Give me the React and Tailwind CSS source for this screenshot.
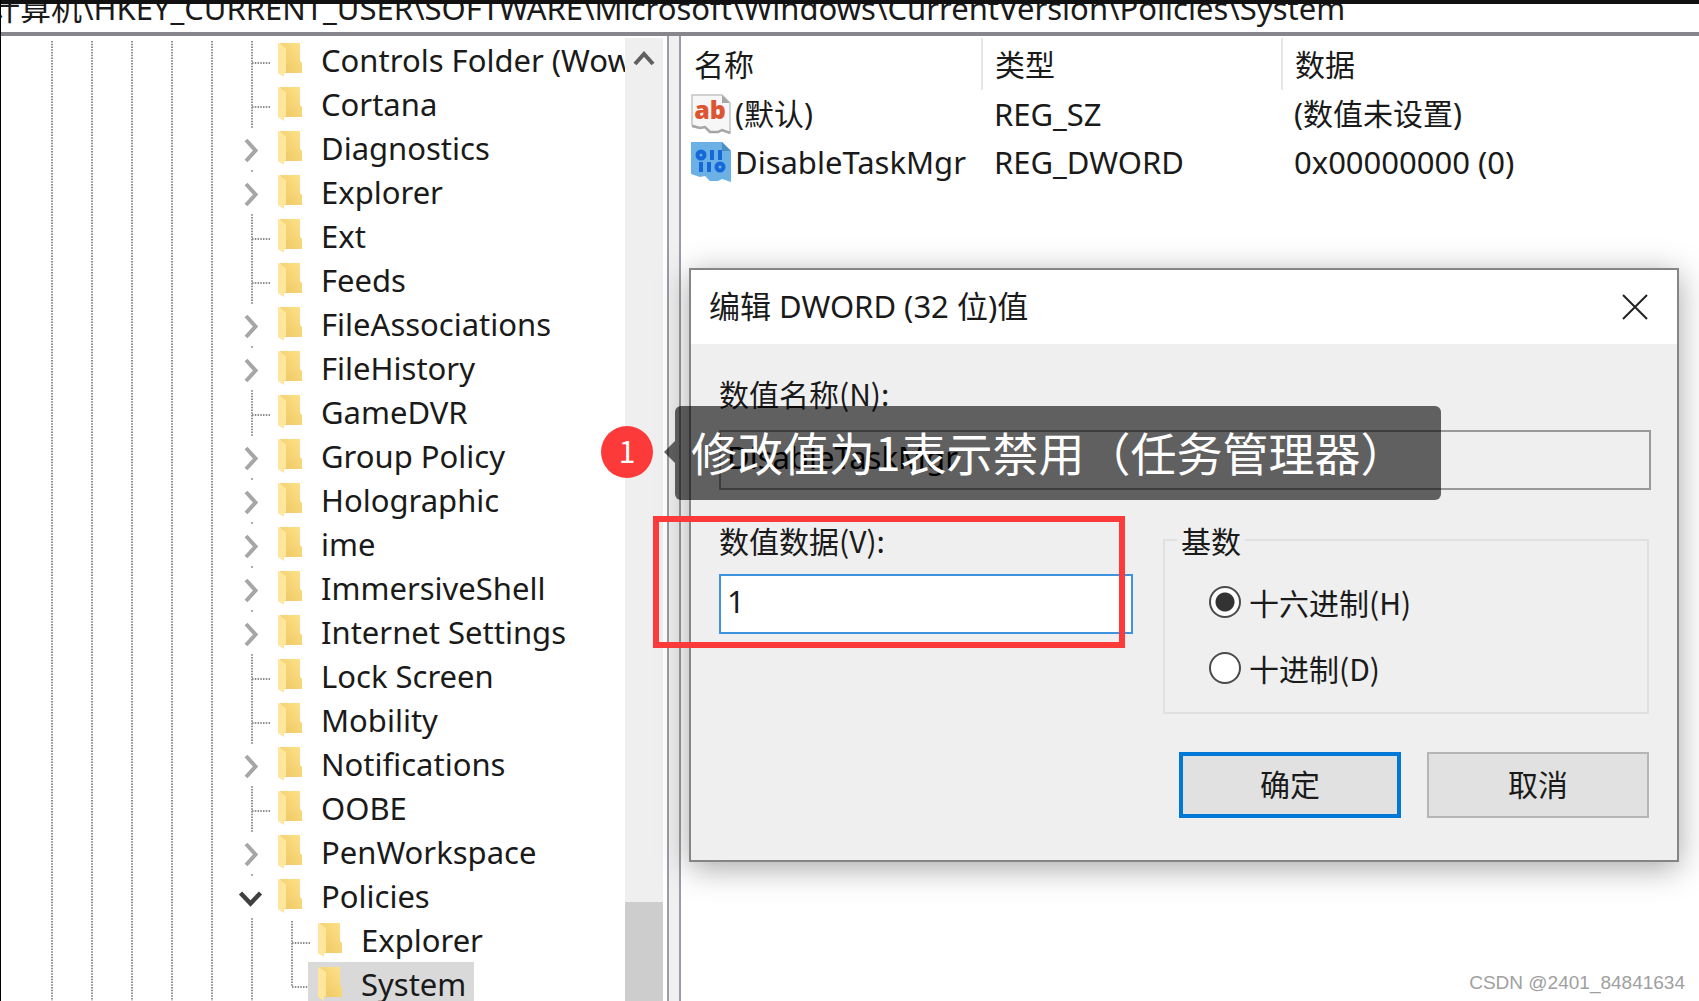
import React, { useState } from 'react';

const FONT = "font-['Noto_Sans','Noto_Sans_CJK_SC',sans-serif]";
const CJK = "font-['Noto_Sans_CJK_SC',sans-serif]";

const tree = [
    { name: 'Controls Folder (Wow64)' },
    { name: 'Cortana' },
    { name: 'Diagnostics', state: 'closed' },
    { name: 'Explorer', state: 'closed' },
    { name: 'Ext' },
    { name: 'Feeds' },
    { name: 'FileAssociations', state: 'closed' },
    { name: 'FileHistory', state: 'closed' },
    { name: 'GameDVR' },
    { name: 'Group Policy', state: 'closed' },
    { name: 'Holographic', state: 'closed' },
    { name: 'ime', state: 'closed' },
    { name: 'ImmersiveShell', state: 'closed' },
    { name: 'Internet Settings', state: 'closed' },
    { name: 'Lock Screen' },
    { name: 'Mobility' },
    { name: 'Notifications', state: 'closed' },
    { name: 'OOBE' },
    { name: 'PenWorkspace', state: 'closed' },
    { name: 'Policies', state: 'open' },
    { name: 'Explorer', child: true },
    { name: 'System', child: true, last: true, selected: true },
];

const values = [
    { icon: 'sz', name: '(默认)', type: 'REG_SZ', data: '(数值未设置)', size: 'text-[30px]' },
    { icon: 'dword', name: 'DisableTaskMgr', type: 'REG_DWORD', data: '0x00000000 (0)', size: 'text-[31px]' },
];

// One 40px wide step of the tree: a dotted guide, a branch or a chevron
function Guide({ kind }) {
    const dots = { stroke: '#8f8f8f', strokeWidth: 2, strokeDasharray: '1.5 1.25' };
    return (
        <svg width="40" height="44" viewBox="0 0 40 44" fill="none" className="shrink-0">
            {(kind === 'line' || kind === 'branch') && <path d="M20 0V44" {...dots} />}
            {kind === 'last' && <path d="M20 0V22" {...dots} />}
            {(kind === 'branch' || kind === 'last') && <path d="M20 22H38" {...dots} />}
            {kind === 'closed' && <path d="M14 11L23.500 21.500L14 32" stroke="#a6a6a6" strokeWidth="4" />}
            {kind === 'open' && <path d="M8.500 16L18.500 26.500L28.500 16" stroke="#404040" strokeWidth="4.500" />}
            {(kind === 'closed' || kind === 'open') && <path d="M20 41.250V44" {...dots} />}
        </svg>
    );
}

function FolderIcon() {
    return (
        <svg width="24" height="36" viewBox="0 0 24 36" className="shrink-0">
            <defs>
                <linearGradient id="folder" x1="0" y1="1" x2="1" y2="0">
                    <stop offset="0" stopColor="#ecc761" />
                    <stop offset="1" stopColor="#ffe18a" />
                </linearGradient>
            </defs>
            <path d="M1 1H22V19L24 21V31H6V6Z" fill="url(#folder)" />
            <path d="M0 1L8 6V30L6 31V35L0 31Z" fill="#ffe69c" />
        </svg>
    );
}

function ValueIcon({ kind }) {
    if (kind === 'sz') {
        return (
            <svg width="40" height="40" viewBox="0 0 40 40" className="shrink-0">
                <path d="M1 1H31L39 9V39L31 36L27 38H19L14 33L9 34L1 31Z" fill="#f7f7f7" stroke="#c4c4c4" strokeWidth="1.500" />
                <path d="M31 1V9H39Z" fill="#a8a8a8" />
                <path d="M1 32L9 34L14 33L19 38H27L31 36L39 39" fill="none" stroke="#a6a6a6" strokeWidth="2.500" />
                <text x="19" y="25" textAnchor="middle" fontFamily="Noto Sans" fontWeight="900" fontSize="25" fill="#dd5533">ab</text>
            </svg>
        );
    }
    return (
        <svg width="40" height="40" viewBox="0 0 40 40" className="shrink-0">
            <path d="M0 0H31L40 9V40L31 37L27 39H19L14 34L9 35L0 32Z" fill="#6cb1e6" />
            <path d="M31 0V9H40Z" fill="#4d8fc4" />
            <g fill="none" stroke="#1668d8" strokeWidth="4">
                <circle cx="10" cy="13" r="3.500" />
                <path d="M21 8V18M29 8V18M10 20V30M18 20V30" />
                <circle cx="29" cy="25" r="3.500" />
            </g>
        </svg>
    );
}

function TreeRow({ item }) {
    const kind = item.last ? 'last' : item.state || 'branch';
    return (
        <li className="flex h-11 shrink-0 items-start">
            {[0, 1, 2, 3, 4].map((i) => (
                <Guide key={i} kind="line" />
            ))}
            {item.child && <Guide kind="line" />}
            <Guide kind={kind} />
            <span className={`-ml-1 -mt-[3px] flex h-[46px] items-center gap-[19px] whitespace-nowrap pb-[2px] pl-[10px] pr-2 text-[31px] ${item.selected ? 'bg-[#d9d9d9]' : ''}`}>
                <FolderIcon />
                {item.name}
            </span>
        </li>
    );
}

function Radio({ label, checked, onChange }) {
    return (
        <label className="flex items-center gap-2 leading-8">
            <input
                type="radio"
                name="base"
                checked={checked}
                onChange={onChange}
                className="size-8 appearance-none rounded-full border-2 border-[#4a4a4a] bg-white checked:bg-[radial-gradient(circle,#333_9px,#fff_10px)]"
            />
            {label}
        </label>
    );
}

function EditDialog() {
    const [value, setValue] = useState('1');
    const [base, setBase] = useState('hex');

    return (
        <div role="dialog" className={`absolute left-[688px] right-5 top-[268px] border-2 border-[#858585] bg-[#efefef] shadow-[0_6px_30px_rgba(0,0,0,0.35)] ${CJK}`}>
            <div className="flex h-[74px] items-center justify-between bg-white pl-[18px] pr-[29px]">
                <h2 className={`pb-[2px] text-[31px] ${FONT}`}>编辑 DWORD (32 位)值</h2>
                <button aria-label="关闭">
                    <svg width="26" height="26" viewBox="0 0 26 26" stroke="#222" strokeWidth="2">
                        <path d="M1 1L25 25M25 1L1 25" />
                    </svg>
                </button>
            </div>

            <div className="pb-[42px] pl-7 pr-[26px] pt-[31px] leading-9">
                <label htmlFor="value-name" className="block">数值名称(N):</label>
                <input
                    id="value-name"
                    readOnly
                    value="DisableTaskMgr"
                    className={`mt-[19px] block h-[60px] w-full border-2 border-[#999] px-[6px] pb-[6px] text-[31px] text-black ${FONT}`}
                />

                <div className="mt-8 flex items-start justify-between">
                    <div className="w-[414px]">
                        <label htmlFor="value-data" className="block">数值数据(V):</label>
                        <input
                            id="value-data"
                            value={value}
                            onChange={(e) => setValue(e.target.value)}
                            className={`mt-4 block h-[60px] w-full border-2 border-[#3d93de] bg-white px-[6px] pb-[6px] text-[31px] outline-none ${FONT}`}
                        />
                    </div>
                    <fieldset className="mr-[2px] w-[486px] border-2 border-[#e0e0e0] px-11 pb-7 pt-7">
                        <legend className="-ml-8 px-1">基数</legend>
                        <div className="flex flex-col gap-[34px]">
                            <Radio label="十六进制(H)" checked={base === 'hex'} onChange={() => setBase('hex')} />
                            <Radio label="十进制(D)" checked={base === 'dec'} onChange={() => setBase('dec')} />
                        </div>
                    </fieldset>
                </div>

                <div className="mr-[2px] mt-[38px] flex justify-end gap-[26px]">
                    <button className="h-[66px] w-[222px] border-4 border-[#0078d7] bg-[#e1e1e1] pb-1">确定</button>
                    <button className="h-[66px] w-[222px] border-2 border-[#b5b5b5] bg-[#e1e1e1] pb-1">取消</button>
                </div>
            </div>
        </div>
    );
}

// Step marker, its caption and the frame around the edited field
function Annotation() {
    return (
        <>
            <div className="absolute left-[652px] top-[516px] h-[132px] w-[472px] border-6 border-[#fd3a3a]" />
            <div className={`absolute left-[600px] top-[426px] flex items-center ${CJK}`}>
                <span className="flex size-[52px] items-center justify-center rounded-full bg-[#fd3a3a] pb-1 text-[30px] text-white">1</span>
                <svg width="11" height="22" viewBox="0 0 11 22" className="ml-[11px]">
                    <path d="M11 0V22L0 11Z" fill="#000" fillOpacity="0.6" />
                </svg>
            </div>
            <div className={`absolute left-[674px] top-[406px] flex h-[94px] w-[766px] items-center whitespace-nowrap rounded-md bg-black/60 pb-1 pl-4 text-[46px] text-white ${CJK}`}>
                修改值为1表示禁用（任务管理器）
            </div>
        </>
    );
}

export default function App() {
    return (
        <div className={`relative flex h-screen flex-col overflow-hidden border-l border-black bg-white text-[30px] text-[#1a1a1a] ${FONT}`}>
            <div className="h-1 shrink-0 bg-[#111]" />
            <header className="h-7 shrink-0 overflow-hidden">
                <input
                    aria-label="地址"
                    readOnly
                    value="计算机\HKEY_CURRENT_USER\SOFTWARE\Microsoft\Windows\CurrentVersion\Policies\System"
                    className="-ml-3 -mt-[18px] block h-11 w-full text-[31px]"
                />
            </header>

            <main className="flex min-h-0 flex-1 border-t-4 border-[#86868c] bg-[#f0f0f0]">
                <nav className="flex w-[668px] shrink-0 border-r-2 border-[#9a9da3] bg-white">
                    <ul className="flex min-w-0 flex-1 flex-col overflow-hidden pl-[31px] pt-[5px]">
                        {tree.map((item, i) => (
                            <TreeRow key={i} item={item} />
                        ))}
                    </ul>
                    <div className="mr-1 mt-[2px] flex w-[38px] flex-col justify-between bg-[#efefef]">
                        <svg width="38" height="40" viewBox="0 0 38 40" fill="none">
                            <path d="M10 26L19 16L28 26" stroke="#606060" strokeWidth="4" />
                        </svg>
                        <div className="h-[99px] bg-[#cdcdcd]" />
                    </div>
                </nav>

                <section className="ml-[10px] min-w-0 flex-1 border-l-2 border-[#9a9da3] bg-white pt-[2px]">
                    <table className="w-full table-fixed text-left">
                        <thead>
                            <tr className="h-[52px]">
                                <th className="w-[301px] border-r-2 border-[#e5e5e5] pl-[13px] font-normal">名称</th>
                                <th className="w-[300px] border-r-2 border-[#e5e5e5] pl-3 font-normal">类型</th>
                                <th className="pl-3 font-normal">数据</th>
                            </tr>
                        </thead>
                        <tbody>
                            {values.map((v) => (
                                <tr key={v.name} className="h-12 whitespace-nowrap leading-10">
                                    <td className={`pl-[10px] ${v.size}`}>
                                        <span className="flex items-center gap-1">
                                            <ValueIcon kind={v.icon} />
                                            {v.name}
                                        </span>
                                    </td>
                                    <td className="pl-3 text-[31px]">{v.type}</td>
                                    <td className={`pl-3 ${v.size}`}>{v.data}</td>
                                </tr>
                            ))}
                        </tbody>
                    </table>
                </section>
            </main>

            <EditDialog />
            <Annotation />
            <p className="absolute bottom-1 right-[14px] font-['Liberation_Sans',sans-serif] text-[19px] text-[#a0a0a0]">CSDN @2401_84841634</p>
        </div>
    );
}
